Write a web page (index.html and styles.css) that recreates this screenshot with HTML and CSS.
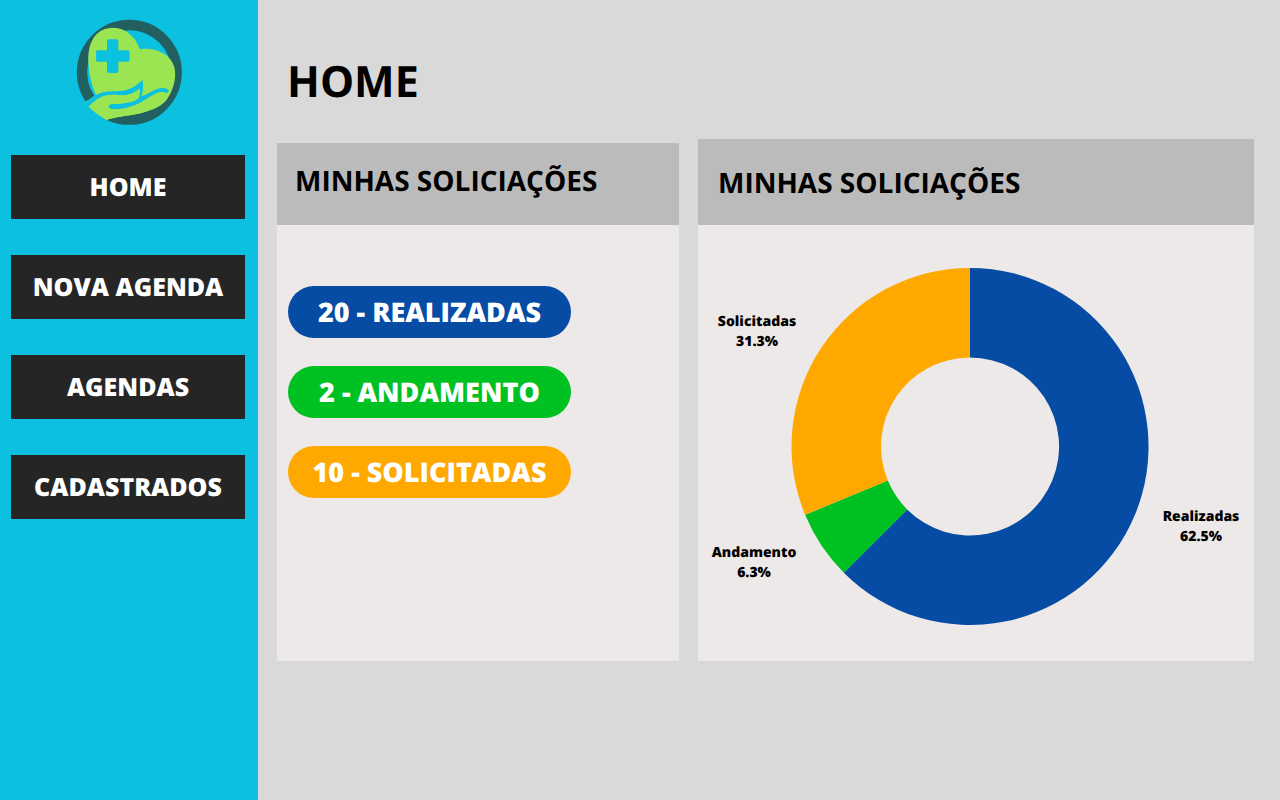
FILE: index.html
```html
<!DOCTYPE html>
<html lang="pt-BR">
<head>
<meta charset="utf-8">
<meta name="viewport" content="width=device-width, initial-scale=1">
<title>Home</title>
<link rel="stylesheet" href="styles.css">
</head>
<body>
<div class="app">
  <aside class="sidebar">
    <svg class="logo" viewBox="-3 0 360 360" aria-hidden="true">
      <circle class="logo-ring" cx="178" cy="181" r="142"/>
      <path class="logo-gap" d="M78 249C57 214 50 170 57 128L66 165L92 240Z"/>
      <path class="logo-leaf" d="M78 249C63 218 54 172 55 133C58 82 82 48 129 47C170 47 197 77 210 112C255 105 300 124 313 165C321 198 310 235 289 265C270 288 236 298 205 305C170 312 140 313 109 324C92 312 70 300 56 284L40 274Z"/>
      <path class="logo-gap" d="M36 278L50 268C60 261 68 253 78 249C104 233 130 240 160 236C184 231 202 219 217 203C221 219 219 237 215 253C239 245 256 227 281 228Q292 230 298 237L289 244C269 232 252 248 228 262C196 284 159 295 123 291Q115 288 115 282Q117 276 126 276C155 276 188 271 204 260C210 251 211 240 208 230C188 248 168 251 145 249C112 246 88 251 56 284L109 324L100 330Z"/>
      <path class="logo-leaf" d="M56 284C88 251 112 246 145 249C168 251 188 248 208 230C211 240 210 251 204 260C188 271 155 276 126 276Q117 276 115 282Q115 288 123 291C159 295 196 284 228 262C252 248 269 232 289 244C278 288 236 298 205 305C170 312 140 313 109 324C92 312 70 300 56 284Z"/>
      <path class="logo-gap" d="M116 82h24q5 0 5 5v28h29q5 0 5 5v24q0 5-5 5h-29v29q0 5-5 5h-24q-5 0-5-5v-29H83q-5 0-5-5v-24q0-5 5-5h28V87q0-5 5-5z"/>
    </svg>
    <nav class="nav">
      <a class="nav-link" href="#home">HOME</a>
      <a class="nav-link" href="#nova-agenda">NOVA AGENDA</a>
      <a class="nav-link" href="#agendas">AGENDAS</a>
      <a class="nav-link" href="#cadastrados">CADASTRADOS</a>
    </nav>
  </aside>
  <main class="main">
    <h1 class="page-title">HOME</h1>
    <div class="cards">
      <section class="card card-totals">
        <header class="card-header"><h2 class="card-title">MINHAS SOLICIAÇÕES</h2></header>
        <ul class="totals">
          <li class="pill pill-done">20 - REALIZADAS</li>
          <li class="pill pill-progress">2 - ANDAMENTO</li>
          <li class="pill pill-requested">10 - SOLICITADAS</li>
        </ul>
      </section>
      <section class="card">
        <header class="card-header"><h2 class="card-title">MINHAS SOLICIAÇÕES</h2></header>
        <svg class="chart" viewBox="0 0 556 436" role="img" aria-label="Solicitações por situação">
          <path class="slice-done" d="M272 43A178.5 178.5 0 1 1 145.8 347.7L209.1 284.4A89 89 0 1 0 272 132.5Z"/>
          <path class="slice-progress" d="M145.8 347.7A178.5 178.5 0 0 1 107.1 289.8L189.8 255.6A89 89 0 0 0 209.1 284.4Z"/>
          <path class="slice-requested" d="M107.1 289.8A178.5 178.5 0 0 1 272 43V132.5A89 89 0 0 0 189.8 255.6Z"/>
          <text class="chart-label"><tspan x="59" y="101">Solicitadas</tspan><tspan x="59" y="121">31.3%</tspan></text>
          <text class="chart-label"><tspan x="56" y="332">Andamento</tspan><tspan x="56" y="352">6.3%</tspan></text>
          <text class="chart-label"><tspan x="503" y="296">Realizadas</tspan><tspan x="503" y="316">62.5%</tspan></text>
        </svg>
      </section>
    </div>
  </main>
</div>
</body>
</html>
```
FILE: styles.css
```css
* {
  box-sizing: border-box;
}

body {
  margin: 0;
  font-family: "Open Sans", "Noto Sans", sans-serif;
  text-rendering: geometricPrecision;
  color: #000;
  background: #d9d9d9;
}

.app {
  display: flex;
  min-height: 100vh;
}

.sidebar {
  flex: none;
  width: 258px;
  padding: 12px 0 24px;
  background: #0cc0df;
}

.logo {
  display: block;
  width: 120px;
  margin: 0 auto 23px;
}

.logo-ring {
  fill: none;
  stroke: #225f60;
  stroke-width: 31;
}

.logo-leaf {
  fill: #9be552;
}

.logo-gap {
  fill: #0cc0df;
}

.nav {
  display: flex;
  flex-direction: column;
  gap: 36px;
  margin: 0 13px 0 11px;
}

.nav-link {
  padding: 12px 0;
  font-size: 25px;
  font-weight: 800;
  line-height: 40px;
  text-align: center;
  text-decoration: none;
  color: #fff;
  background: #252525;
}

.main {
  flex: 1;
  min-width: 0;
  padding: 51px 26px 24px 19px;
}

.page-title {
  margin: 0 0 28px;
  padding-left: 10px;
  font-size: 43px;
  font-weight: 700;
  line-height: 60px;
}

.cards {
  display: grid;
  grid-template-columns: 402fr 556fr;
  gap: 19px;
}

.card {
  display: flex;
  flex-direction: column;
  background: #ede9e8;
}

.card-header {
  padding: 24px 20px 22px;
  background: #bbb;
}

.card-totals {
  margin-top: 4px;
}

.card-totals .card-header {
  padding: 18px 18px 24px;
}

.card-title {
  margin: 0;
  font-size: 28px;
  font-weight: 700;
  line-height: 40px;
}

.totals {
  display: flex;
  flex-direction: column;
  align-items: flex-start;
  gap: 28px;
  margin: 0;
  padding: 61px 11px;
  list-style: none;
}

.pill {
  width: 283px;
  padding: 6px 0;
  border-radius: 26px;
  font-size: 27px;
  font-weight: 800;
  line-height: 40px;
  text-align: center;
  color: #fff;
}

.pill-done {
  background: #064ba4;
}

.pill-progress {
  background: #00c122;
}

.pill-requested {
  background: #ffa800;
}

.chart {
  display: block;
  width: 100%;
}

.slice-done {
  fill: #064ba4;
}

.slice-progress {
  fill: #00c122;
}

.slice-requested {
  fill: #ffa800;
}

.chart-label {
  font-size: 14px;
  font-weight: 800;
  text-anchor: middle;
}
```
